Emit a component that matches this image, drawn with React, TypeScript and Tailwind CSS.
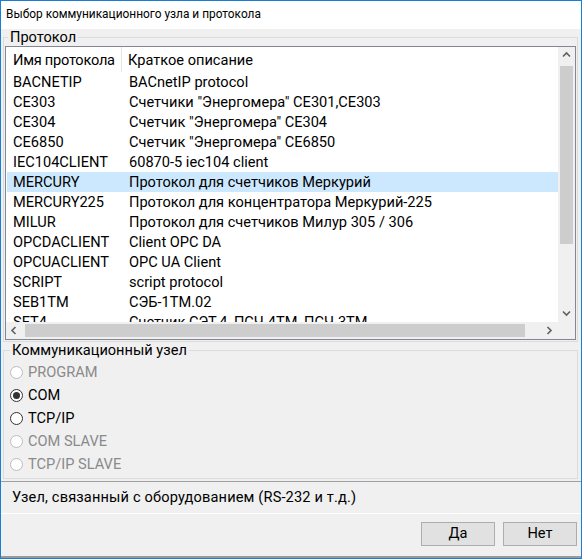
import React from "react";

const rows: [string, string][] = [
  ["BACNETIP", "BACnetIP protocol"],
  ["CE303", "Счетчики \"Энергомера\" CE301,CE303"],
  ["CE304", "Счетчик \"Энергомера\" CE304"],
  ["CE6850", "Счетчик \"Энергомера\" CE6850"],
  ["IEC104CLIENT", "60870-5 iec104 client"],
  ["MERCURY", "Протокол для счетчиков Меркурий"],
  ["MERCURY225", "Протокол для концентратора Меркурий-225"],
  ["MILUR", "Протокол для счетчиков Милур 305 / 306"],
  ["OPCDACLIENT", "Client OPC DA"],
  ["OPCUACLIENT", "OPC UA Client"],
  ["SCRIPT", "script protocol"],
  ["SEB1TM", "СЭБ-1ТМ.02"],
  ["SET4", "Счетчик СЭТ-4, ПСЧ-4ТМ, ПСЧ-3ТМ"],
];

const radios: { label: string; disabled: boolean; checked: boolean }[] = [
  { label: "PROGRAM", disabled: true, checked: false },
  { label: "COM", disabled: false, checked: true },
  { label: "TCP/IP", disabled: false, checked: false },
  { label: "COM SLAVE", disabled: true, checked: false },
  { label: "TCP/IP SLAVE", disabled: true, checked: false },
];

function Chevron({ dir }: { dir: "up" | "down" | "left" | "right" }) {
  const pts: Record<string, string> = {
    up: "1,5.5 4.5,2 8,5.5",
    down: "1,2.5 4.5,6 8,2.5",
    left: "5.5,1 2,4.5 5.5,8",
    right: "2.5,1 6,4.5 2.5,8",
  };
  return (
    <svg width="9" height="9" viewBox="0 0 9 9">
      <polyline points={pts[dir]} fill="none" stroke="#606060" strokeWidth="1.6" />
    </svg>
  );
}

export default function App() {
  return (
    <div className="w-[582px] h-[559px] flex flex-col border border-[#1a7fd4] bg-[#f0f0f0] text-black overflow-hidden font-['Roboto',sans-serif] text-[14.6px]">
      <div className="h-[28px] shrink-0 bg-white flex items-center pl-[5px] text-[11.9px] leading-none">
        Выбор коммуникационного узла и протокола
      </div>

      <fieldset className="w-[575px] ml-[2px] shrink-0 border border-[#dcdcdc] pl-[1px] pr-[1px] pb-[1px] m-0">
        <legend className="ml-[3px] px-[2px] leading-[16px]">Протокол</legend>
        <div className="mt-[1px] w-[571px] h-[294px] border border-[#828790] bg-white flex flex-col">
          <div className="flex h-[275px]">
            <div className="flex-1 overflow-hidden">
              <div className="flex h-[25px] items-center">
                <div className="w-[116px] pl-[7px] pt-[2px] h-full flex items-center border-r border-[#e5e5e5] whitespace-nowrap tracking-[-0.25px]">Имя протокола</div>
                <div className="pl-[6px] pt-[2px]">Краткое описание</div>
              </div>
              {rows.map(([name, desc]) => (
                <div
                  key={name}
                  className={
                    "flex h-[20px] pt-[2px] items-center ml-[1px] whitespace-nowrap " +
                    (name === "MERCURY" ? "bg-[#cce8ff]" : "")
                  }
                >
                  <div className="w-[115px] pl-[6px]">{name}</div>
                  <div className="pl-[7px]">{desc}</div>
                </div>
              ))}
            </div>
            <div className="w-[17px] bg-[#f0f0f0] flex flex-col">
              <div className="h-[17px] flex items-center justify-center">
                <Chevron dir="up" />
              </div>
              <div className="mt-[2px] ml-[2px] w-[13px] h-[178px] bg-[#cdcdcd]" />
              <div className="flex-1" />
              <div className="h-[17px] flex items-center justify-center">
                <Chevron dir="down" />
              </div>
            </div>
          </div>
          <div className="flex h-[17px]">
            <div className="flex-1 bg-[#f0f0f0] flex items-center">
              <div className="w-[17px] h-[17px] flex items-center justify-center">
                <Chevron dir="left" />
              </div>
              <div className="ml-[2px] w-[500px] h-[13px] bg-[#cdcdcd]" />
              <div className="flex-1" />
              <div className="w-[17px] h-[17px] flex items-center justify-center">
                <Chevron dir="right" />
              </div>
            </div>
            <div className="w-[17px] bg-[#f0f0f0]" />
          </div>
        </div>
      </fieldset>

      <fieldset className="w-[575px] ml-[2px] shrink-0 border border-[#dcdcdc] pt-[3px] pb-[2px] m-0">
        <legend className="ml-[6px] px-[2px] leading-[16px]">Коммуникационный узел</legend>
        {radios.map((r) => (
          <div key={r.label} className="h-[23px] flex items-center pl-[6px]">
            <div
              className={
                "w-[13px] h-[13px] rounded-full border bg-white flex items-center justify-center " +
                (r.disabled ? "border-[#bcbcbc]" : "border-[#333333]")
              }
            >
              {r.checked && <div className="w-[7px] h-[7px] rounded-full bg-[#333333]" />}
            </div>
            <span className={"ml-[5px] pt-[1px] " + (r.disabled ? "text-[#8a8a8a]" : "text-black")}>{r.label}</span>
          </div>
        ))}
      </fieldset>

      <div className="mt-[2px] h-[33px] shrink-0 border-t border-[#a0a0a0] border-b border-b-white flex items-center pl-[11px] pt-[1px] tracking-[0.15px]">
        Узел, связанный с оборудованием (RS-232 и т.д.)
      </div>

      <div className="flex-1 flex justify-end items-start pt-[8px] pr-[4px] gap-[8px] border-b-2 border-[#9a9a9a]">
        <button className="w-[74px] h-[24px] bg-[#e1e1e1] border border-[#adadad] flex items-center justify-center">
          Да
        </button>
        <button className="w-[74px] h-[24px] bg-[#e1e1e1] border border-[#adadad] flex items-center justify-center">
          Нет
        </button>
      </div>
    </div>
  );
}
